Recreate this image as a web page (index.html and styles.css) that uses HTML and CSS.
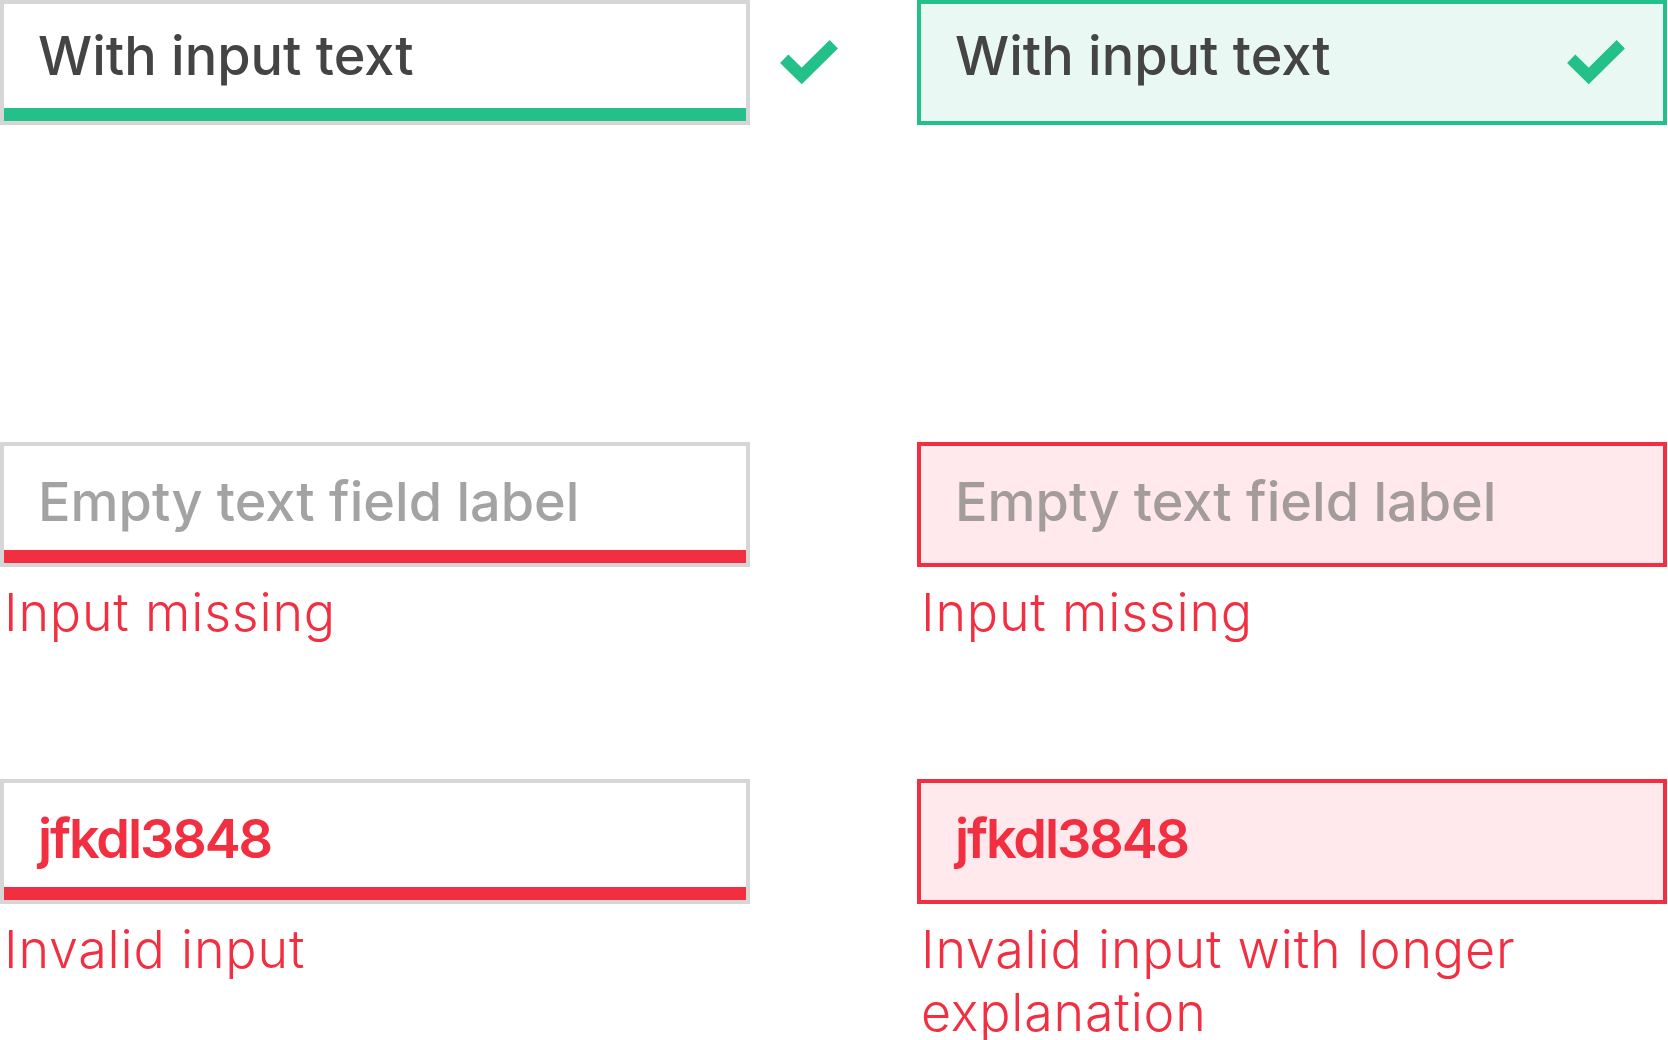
FILE: index.html
```html
<!DOCTYPE html>
<html lang="en">
<head>
<meta charset="utf-8">
<title>Text field states</title>
<link rel="stylesheet" href="styles.css">
</head>
<body>
<div class="states">
  <div class="field">
    <div class="box box-plain bar-success"><span class="value">With input text</span></div>
  </div>
  <div class="status">
    <svg class="check" width="60" height="48" viewBox="0 0 60 48"><polyline points="4.2,20.7 21.7,38 53.8,6.2" /></svg>
  </div>
  <div class="field">
    <div class="box box-success"><span class="value">With input text</span>
      <svg class="check check-inset" width="60" height="48" viewBox="0 0 60 48"><polyline points="4.2,20.7 21.7,38 53.8,6.2" /></svg>
    </div>
  </div>

  <div class="field">
    <div class="box box-plain bar-error lowered"><span class="value placeholder">Empty text field label</span></div>
    <p class="helper">Input missing</p>
  </div>
  <div class="status"></div>
  <div class="field">
    <div class="box box-error lowered"><span class="value placeholder placeholder-tint">Empty text field label</span></div>
    <p class="helper">Input missing</p>
  </div>

  <div class="field">
    <div class="box box-plain bar-error lowered"><span class="value invalid">jfkdl3848</span></div>
    <p class="helper">Invalid input</p>
  </div>
  <div class="status"></div>
  <div class="field">
    <div class="box box-error lowered"><span class="value invalid">jfkdl3848</span></div>
    <p class="helper">Invalid input with longer explanation</p>
  </div>
</div>
</body>
</html>
```

FILE: styles.css
```css
html, body {
  margin: 0;
  padding: 0;
  background: #ffffff;
}

body {
  font-family: Inter, "Liberation Sans", sans-serif;
  width: 1668px;
  height: 1040px;
  overflow: hidden;
}

.states {
  display: grid;
  grid-template-columns: 750px 167px 750px;
  grid-template-rows: 442px 337px auto;
  align-items: start;
}

.field {
  display: flex;
  flex-direction: column;
}

.box {
  box-sizing: border-box;
  height: 125px;
  border: 4px solid #d6d6d6;
  display: flex;
  align-items: center;
  padding: 0 36px 13px 34px;
}

.box-plain {
  background: #ffffff;
}

.bar-success {
  box-shadow: inset 0 -13px 0 #23c189;
}

.bar-error {
  box-shadow: inset 0 -13px 0 #f12f41;
}

.box-success {
  border-color: #23c189;
  background: #e9f8f2;
}

.box-error {
  border-color: #f12f41;
  background: #ffe9ec;
}

.lowered .value {
  position: relative;
  top: 4px;
}

.value {
  font-size: 54px;
  line-height: 1;
  font-weight: 500;
  color: #444444;
  white-space: nowrap;
}

.placeholder {
  color: #a3a3a3;
}

.placeholder-tint {
  color: #a39b9c;
}

.invalid {
  color: #f12f41;
  font-weight: 600;
  letter-spacing: -2.1px;
}

.status {
  padding: 38px 0 0 30px;
}

.check {
  display: block;
}

.check polyline {
  fill: none;
  stroke: #23c189;
  stroke-width: 11.8;
  stroke-linecap: butt;
  stroke-linejoin: miter;
}

.check-inset {
  margin-left: auto;
  margin-top: 12px;
  flex: none;
}

.helper {
  margin: 14px 0 0 0;
  padding-left: 4px;
  font-size: 52px;
  line-height: 63px;
  font-weight: 300;
  letter-spacing: 0.8px;
  color: #f12f41;
}
```
